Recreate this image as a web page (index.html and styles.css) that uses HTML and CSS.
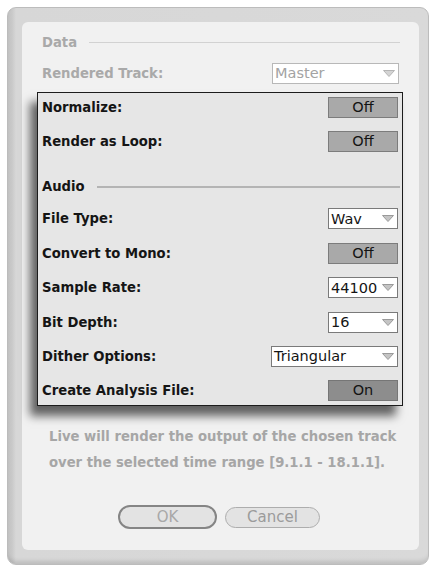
FILE: index.html
```html
<!DOCTYPE html>
<html>
<head>
<meta charset="utf-8">
<link rel="stylesheet" href="styles.css">
</head>
<body>
<div class="frame">
  <div class="panel">
    <div class="head head-dim"><span>Data</span><i class="rule"></i></div>
    <div class="row row-dim">
      <span class="label">Rendered Track:</span>
      <div class="select select-wide select-dim"><span>Master</span><svg class="arrow" viewBox="0 0 12 7"><polygon points="0.5,0.5 11.5,0.5 6,6.5"/></svg></div>
    </div>
    <div class="popup">
      <div class="row"><span class="label">Normalize:</span><div class="toggle">Off</div></div>
      <div class="row"><span class="label">Render as Loop:</span><div class="toggle">Off</div></div>
      <div class="head head-audio"><span>Audio</span><i class="rule"></i></div>
      <div class="row"><span class="label">File Type:</span><div class="select"><span>Wav</span><svg class="arrow" viewBox="0 0 12 7"><polygon points="0.5,0.5 11.5,0.5 6,6.5"/></svg></div></div>
      <div class="row"><span class="label">Convert to Mono:</span><div class="toggle">Off</div></div>
      <div class="row"><span class="label">Sample Rate:</span><div class="select"><span>44100</span><svg class="arrow" viewBox="0 0 12 7"><polygon points="0.5,0.5 11.5,0.5 6,6.5"/></svg></div></div>
      <div class="row"><span class="label">Bit Depth:</span><div class="select"><span>16</span><svg class="arrow" viewBox="0 0 12 7"><polygon points="0.5,0.5 11.5,0.5 6,6.5"/></svg></div></div>
      <div class="row"><span class="label">Dither Options:</span><div class="select select-wide"><span>Triangular</span><svg class="arrow" viewBox="0 0 12 7"><polygon points="0.5,0.5 11.5,0.5 6,6.5"/></svg></div></div>
      <div class="row row-last"><span class="label">Create Analysis File:</span><div class="toggle toggle-on">On</div></div>
    </div>
    <p class="note">Live will render the output of the chosen track<br>over the selected time range [9.1.1 - 18.1.1].</p>
    <div class="buttons">
      <div class="btn btn-default">OK</div>
      <div class="btn">Cancel</div>
    </div>
  </div>
</div>
</body>
</html>
```

FILE: styles.css
```css
html, body {
  margin: 0;
  padding: 0;
  background: #ffffff;
}
body {
  font-family: "DejaVu Sans", "Liberation Sans", sans-serif;
  width: 434px;
  height: 568px;
  overflow: hidden;
}
.frame {
  box-sizing: border-box;
  margin: 7px 5px 0 7px;
  width: 422px;
  height: 558px;
  padding: 14px 9px 14px 14px;
  border: 1px solid #bcbcbc;
  border-radius: 9px;
  background: linear-gradient(to right, #c2c2c2 0px, #c9c9c9 4px, #d7d7d7 8px, #d9d9d9 100%);
  box-shadow: inset 0 -6px 4px -3px rgba(0, 0, 0, 0.12);
}
.panel {
  box-sizing: border-box;
  height: 528px;
  padding: 10px 16px 0 15px;
  background: #f1f1f1;
  border-radius: 6px;
}
.head {
  display: flex;
  align-items: center;
  height: 20px;
  padding: 0 3px 0 5px;
  font-weight: bold;
  font-size: 13.2px;
}
.head .rule {
  flex: 1;
  height: 1px;
  margin-left: 12px;
}
.head-dim {
  color: #a9a9a9;
}
.head-dim .rule {
  background: #d2d2d2;
}
.head-audio {
  height: 24px;
  margin-top: 18.5px;
  margin-bottom: 5.5px;
  padding: 0 2px 0 4px;
  color: #151515;
}
.head-audio .rule {
  background: #b4b4b4;
  height: 2px;
}
.row {
  display: flex;
  align-items: center;
  justify-content: space-between;
  height: 29px;
  padding: 0 4px 0 4px;
  margin-bottom: 5.4px;
}
.row-last {
  margin-bottom: 0;
}
.row-dim {
  height: 20px;
  margin-top: 11px;
  margin-bottom: 9px;
  padding: 0 4px 0 5px;
}
.label {
  font-weight: bold;
  font-size: 13.2px;
  color: #151515;
}
.row-dim .label {
  color: #a9a9a9;
}
.popup {
  background: #e6e6e6;
  border: 1px solid #1c1c1c;
  box-shadow: -7px 10px 9px rgba(0, 0, 0, 0.6);
}
.toggle {
  box-sizing: border-box;
  width: 70px;
  height: 21px;
  border: 1px solid #7c7c7c;
  background: #a9a9a9;
  color: #141414;
  font-size: 14.5px;
  line-height: 19px;
  text-align: center;
}
.toggle-on {
  background: #8d8d8d;
  border-color: #767676;
}
.select {
  box-sizing: border-box;
  display: flex;
  align-items: center;
  justify-content: space-between;
  width: 70px;
  height: 21px;
  padding: 0 3px 0 2px;
  border: 1px solid #7a7a7a;
  background: #ffffff;
  color: #141414;
  font-size: 14.5px;
}
.select-wide {
  width: 127px;
}
.arrow {
  width: 12px;
  height: 7px;
  flex: none;
}
.arrow polygon {
  fill: #c4c4c4;
  stroke: #9a9a9a;
  stroke-width: 1;
}
.select-dim {
  border-color: #b8b8b8;
  color: #a3a3a3;
}
.select-dim .arrow polygon {
  fill: #d4d4d4;
  stroke: #b4b4b4;
}
.note {
  margin: 18px 0 0 0;
  padding-left: 12px;
  font-weight: bold;
  font-size: 13.2px;
  line-height: 26px;
  color: #a6a6a6;
}
.buttons {
  display: flex;
  justify-content: center;
  align-items: center;
  gap: 8px;
  margin-top: 29px;
  padding-right: 2px;
}
.btn {
  box-sizing: border-box;
  width: 95px;
  height: 21px;
  border: 1px solid #adadad;
  border-radius: 11px;
  background: #e3e3e3;
  color: #9b9b9b;
  font-size: 15px;
  line-height: 19px;
  text-align: center;
}
.btn-default {
  width: 99px;
  height: 24px;
  border: 2px solid #858585;
  border-radius: 12px;
  line-height: 20px;
  color: #a8a8a8;
}
```
